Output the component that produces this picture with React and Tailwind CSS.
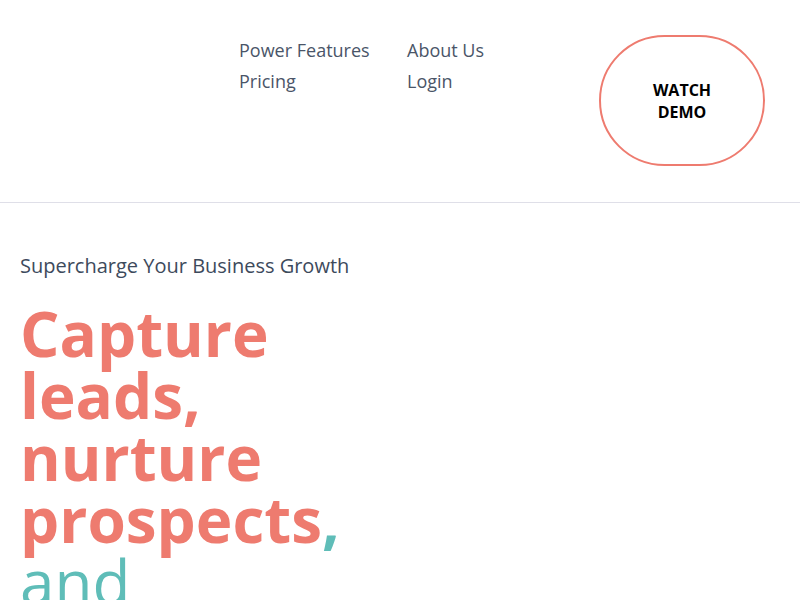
import React from 'react';

const navLinks = ['Power Features', 'About Us', 'Pricing', 'Login'];

const App = () => {
  return (
    <div className="h-screen overflow-y-scroll bg-white font-['Open_Sans',sans-serif]">
      <header className="flex items-start pl-5 pr-[35px] pt-[35px] pb-[36px] border-b border-[#dfdfe8]">
        <div className="w-[219px]" />
        <nav className="grid grid-cols-[168px_168px] text-[18px] leading-[31px] text-[#4a5568]">
          {navLinks.map((l) => (
            <a key={l} href="#" className="whitespace-nowrap">
              {l}
            </a>
          ))}
        </nav>
        <button className="ml-auto w-[166px] h-[131px] rounded-[66px] border-2 border-[#ee7b6f] bg-white px-10 text-[16px] leading-[22px] font-bold text-black">
          WATCH DEMO
        </button>
      </header>

      <section className="grid grid-cols-2 px-5 pt-[49px] pb-20">
        <div>
          <p className="text-[20px] leading-[28px] text-[#3d4a5c]">
            Supercharge Your Business Growth
          </p>
          <h1 className="mt-[22px] text-[62px] leading-[62px] font-bold text-[#ee7b6f]">
            Capture leads, nurture prospects<span className="text-[#5fbdb8]">,</span>{' '}
            <span className="font-normal text-[#5fbdb8]">and automate sales</span>
          </h1>
          <p className="mt-8 text-[18px] leading-[30px] text-[#4a5568]">
            One platform to grow your pipeline, automate follow-ups and turn
            conversations into customers.
          </p>
        </div>
        <div />
      </section>
    </div>
  );
};

export default App;
